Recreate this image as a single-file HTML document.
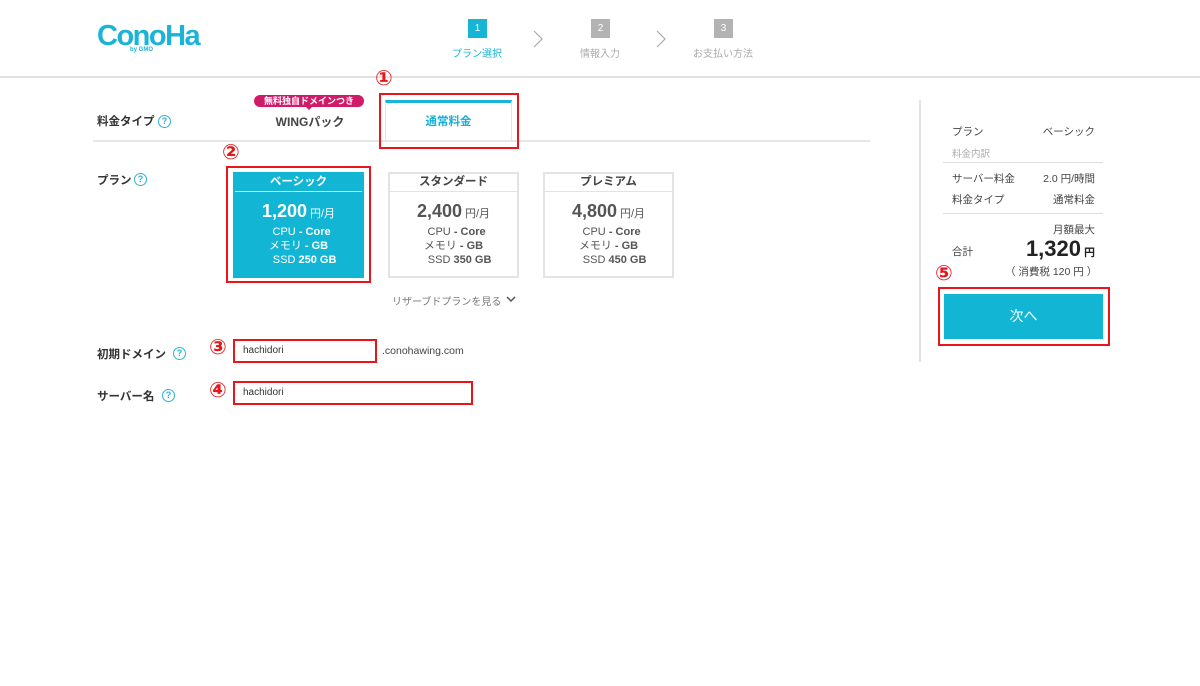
<!DOCTYPE html>
<html><head><meta charset="utf-8"><style>
*{margin:0;padding:0;box-sizing:border-box}
body{width:1200px;height:686px;background:#fff;position:relative;overflow:hidden;font-family:"Liberation Sans","Noto Sans CJK JP",sans-serif;color:#333}
.a{position:absolute;white-space:nowrap}
.q{position:absolute;width:13px;height:13px;border:1.5px solid #2bb4d6;border-radius:50%;color:#2bb4d6;font-size:9px;line-height:10px;text-align:center;font-weight:bold}
.red{position:absolute;border:2px solid #e8161b}
.num{position:absolute;color:#e8161b;font-size:21px;font-weight:bold;line-height:20px;font-family:"DejaVu Sans",sans-serif}
.lbl{font-size:11.5px;font-weight:bold;color:#333}
.card{position:absolute;width:131px;height:106px;border:2px solid #e3e3e3;background:#fff;color:#555}
.card .h{height:18px;border-bottom:1.5px solid #e3e3e3;text-align:center;font-size:11.5px;font-weight:bold;line-height:16px;color:#444}
.card .p{text-align:center;font-size:18px;font-weight:bold;margin-top:8px;line-height:22px}
.card .p small{font-size:11px;font-weight:normal;margin-left:3px}
.card .l{font-size:11px;line-height:14px;text-align:center}
.card b{font-weight:bold}
.step{position:absolute;width:19px;height:19px;background:#b3b3b3;color:#fff;font-size:10px;text-align:center;line-height:19px}
.sl{position:absolute;font-size:10px;color:#aaa;width:100px;text-align:center}
.r{font-size:10.5px;color:#444}
</style></head><body>
<div class="a" style="left:97px;top:19px;font-size:29px;font-weight:bold;color:#1bb3d7;letter-spacing:-1.5px;line-height:34px">ConoHa</div>
<div class="a" style="left:130px;top:47px;font-size:6px;font-weight:bold;color:#1bb3d7">by GMO</div>

<div class="step" style="left:468px;top:19px;background:#16b5d4">1</div>
<div class="sl" style="left:427px;top:45px;color:#16b5d4">プラン選択</div>
<div class="step" style="left:591px;top:19px">2</div>
<div class="sl" style="left:550px;top:45px">情報入力</div>
<div class="step" style="left:714px;top:19px">3</div>
<div class="sl" style="left:673px;top:45px">お支払い方法</div>
<svg class="a" style="left:532px;top:29px" width="12" height="20"><path d="M2 2 L10 10 L2 18" fill="none" stroke="#aaa" stroke-width="1.2"/></svg>
<svg class="a" style="left:655px;top:29px" width="12" height="20"><path d="M2 2 L10 10 L2 18" fill="none" stroke="#aaa" stroke-width="1.2"/></svg>
<div class="a" style="left:0;top:76px;width:1200px;height:2px;background:#e2e2e2"></div>

<div class="a lbl" style="left:97px;top:113px">料金タイプ</div>
<div class="q" style="left:158px;top:115px">?</div>
<div class="a" style="left:254px;top:95px;width:110px;height:12px;border-radius:6px;background:#d01a6a;color:#fff;font-size:9px;font-weight:bold;text-align:center;line-height:12px">無料独自ドメインつき</div>
<div class="a" style="left:305px;top:106px;width:0;height:0;border-left:4px solid transparent;border-right:4px solid transparent;border-top:4px solid #d01a6a"></div>
<div class="a" style="left:270px;top:113px;width:80px;text-align:center;font-size:12px;font-weight:bold;color:#444">WINGパック</div>
<div class="a" style="left:385px;top:100px;width:127px;height:41px;border:1px solid #e3e3e3;border-bottom:none;border-top:3px solid #18b6d6;background:#fff"></div>
<div class="a" style="left:385px;top:113px;width:127px;text-align:center;font-size:11.5px;font-weight:bold;color:#18b0d4">通常料金</div>
<div class="a" style="left:93px;top:140px;width:777px;height:1.5px;background:#e6e6e6"></div>
<div class="red" style="left:379px;top:93px;width:140px;height:56px"></div>
<div class="num" style="left:375px;top:68px">①</div>

<div class="a lbl" style="left:97px;top:172px">プラン</div>
<div class="q" style="left:134px;top:173px">?</div>
<div class="num" style="left:222px;top:142px">②</div>
<div class="red" style="left:226px;top:166px;width:145px;height:117px"></div>
<div class="card" style="left:233px;top:172px;background:#12b6d4;border-color:#12b6d4;color:#fff">
<div class="h" style="color:#fff;border-color:#d0f0f7">ベーシック</div>
<div class="p">1,200<small>円/月</small></div>
<div class="l">&nbsp;&nbsp;CPU <b>- Core</b></div>
<div class="l">メモリ <b>- GB</b></div>
<div class="l">&nbsp;&nbsp;&nbsp;&nbsp;SSD <b>250 GB</b></div>
</div>
<div class="card" style="left:388px;top:172px">
<div class="h">スタンダード</div>
<div class="p">2,400<small>円/月</small></div>
<div class="l">&nbsp;&nbsp;CPU <b>- Core</b></div>
<div class="l">メモリ <b>- GB</b></div>
<div class="l">&nbsp;&nbsp;&nbsp;&nbsp;SSD <b>350 GB</b></div>
</div>
<div class="card" style="left:543px;top:172px">
<div class="h">プレミアム</div>
<div class="p">4,800<small>円/月</small></div>
<div class="l">&nbsp;&nbsp;CPU <b>- Core</b></div>
<div class="l">メモリ <b>- GB</b></div>
<div class="l">&nbsp;&nbsp;&nbsp;&nbsp;SSD <b>450 GB</b></div>
</div>
<div class="a" style="left:392px;top:293px;font-size:10px;color:#777">リザーブドプランを見る</div>
<svg class="a" style="left:506px;top:295px" width="10" height="8"><path d="M1 2 L5 6 L9 2" fill="none" stroke="#555" stroke-width="1.5"/></svg>

<div class="a lbl" style="left:97px;top:346px">初期ドメイン</div>
<div class="q" style="left:173px;top:347px">?</div>
<div class="num" style="left:209px;top:337px">③</div>
<div class="red" style="left:233px;top:339px;width:144px;height:24px"></div>
<div class="a" style="left:243px;top:345px;font-size:10px;color:#333">hachidori</div>
<div class="a" style="left:382px;top:345px;font-size:10.5px;color:#444">.conohawing.com</div>

<div class="a lbl" style="left:97px;top:388px">サーバー名</div>
<div class="q" style="left:162px;top:389px">?</div>
<div class="num" style="left:209px;top:380px">④</div>
<div class="red" style="left:233px;top:381px;width:240px;height:24px"></div>
<div class="a" style="left:243px;top:387px;font-size:10px;color:#333">hachidori</div>

<div class="a" style="left:919px;top:100px;width:1.5px;height:262px;background:#e2e2e2"></div>
<div class="a r" style="left:952px;top:124px">プラン</div>
<div class="a r" style="left:1095px;top:124px;transform:translateX(-100%)">ベーシック</div>
<div class="a" style="left:952px;top:146px;font-size:9.5px;color:#aaa">料金内訳</div>
<div class="a" style="left:943px;top:162px;width:160px;height:1px;background:#ddd"></div>
<div class="a r" style="left:952px;top:171px">サーバー料金</div>
<div class="a r" style="left:1095px;top:171px;transform:translateX(-100%)">2.0 円/時間</div>
<div class="a r" style="left:952px;top:192px">料金タイプ</div>
<div class="a r" style="left:1095px;top:192px;transform:translateX(-100%)">通常料金</div>
<div class="a" style="left:943px;top:213px;width:160px;height:1px;background:#ddd"></div>
<div class="a r" style="left:1095px;top:222px;transform:translateX(-100%)">月額最大</div>
<div class="a r" style="left:952px;top:244px">合計</div>
<div class="a" style="left:1095px;top:236px;transform:translateX(-100%);font-size:22px;font-weight:bold;color:#222">1,320<span style="font-size:11px;margin-left:3px">円</span></div>
<div class="a r" style="left:1005px;top:264px">（ 消費税 120 円 ）</div>
<div class="num" style="left:935px;top:263px">⑤</div>
<div class="red" style="left:938px;top:287px;width:172px;height:59px"></div>
<div class="a" style="left:944px;top:294px;width:159px;height:45px;background:#12b6d4;color:#fff;font-size:14px;text-align:center;line-height:45px">次へ</div>
</body></html>
